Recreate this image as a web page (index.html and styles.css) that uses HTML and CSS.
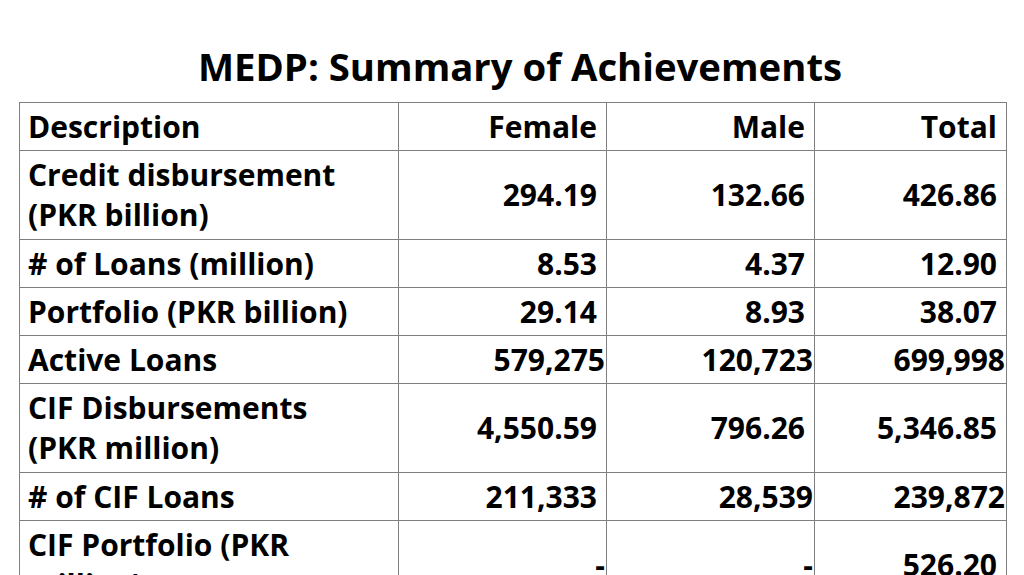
FILE: index.html
```html
<!DOCTYPE html>
<html>
<head>
<meta charset="utf-8">
<link rel="stylesheet" href="styles.css">
</head>
<body>
<h1 class="title">MEDP: Summary of Achievements</h1>
<table class="summary">
  <colgroup>
    <col class="c-desc"><col class="c-num"><col class="c-num"><col class="c-tot">
  </colgroup>
  <thead>
    <tr class="row1">
      <th class="desc">Description</th>
      <th class="num">Female</th>
      <th class="num">Male</th>
      <th class="num">Total</th>
    </tr>
  </thead>
  <tbody>
    <tr class="row2">
      <td class="desc">Credit disbursement (PKR billion)</td>
      <td class="num">294.19</td>
      <td class="num">132.66</td>
      <td class="num">426.86</td>
    </tr>
    <tr class="row1">
      <td class="desc"># of Loans (million)</td>
      <td class="num">8.53</td>
      <td class="num">4.37</td>
      <td class="num">12.90</td>
    </tr>
    <tr class="row1">
      <td class="desc">Portfolio (PKR billion)</td>
      <td class="num">29.14</td>
      <td class="num">8.93</td>
      <td class="num">38.07</td>
    </tr>
    <tr class="row1">
      <td class="desc">Active Loans</td>
      <td class="num tight">579,275</td>
      <td class="num tight">120,723</td>
      <td class="num tight">699,998</td>
    </tr>
    <tr class="row2">
      <td class="desc">CIF Disbursements (PKR million)</td>
      <td class="num">4,550.59</td>
      <td class="num">796.26</td>
      <td class="num">5,346.85</td>
    </tr>
    <tr class="row1">
      <td class="desc"># of CIF Loans</td>
      <td class="num">211,333</td>
      <td class="num tight">28,539</td>
      <td class="num tight">239,872</td>
    </tr>
    <tr class="row2">
      <td class="desc">CIF Portfolio (PKR million)</td>
      <td class="num tight">-</td>
      <td class="num tight">-</td>
      <td class="num">526.20</td>
    </tr>
  </tbody>
</table>
</body>
</html>
```

FILE: styles.css
```css
html, body {
  margin: 0;
  padding: 0;
  background: #ffffff;
  color: #000000;
  overflow: hidden;
}
body {
  font-family: "Open Sans", "Noto Sans", sans-serif;
  font-weight: 700;
}
.title {
  margin: 0;
  padding: 40px 0 0 16px;
  height: 62px;
  font-size: 38.3px;
  line-height: 52px;
  text-align: center;
  font-weight: 700;
}
.summary {
  margin-left: 19px;
  width: 987px;
  border-collapse: collapse;
  table-layout: fixed;
  font-size: 30px;
}
.c-desc { width: 379px; }
.c-num { width: 208px; }
.c-tot { width: 192px; }
.summary th, .summary td {
  border: 1px solid #7f7f7f;
  padding: 0 9px 0 8px;
  line-height: 40px;
  vertical-align: middle;
  font-weight: 700;
}
.row1 { height: 48px; }
.row2 { height: 89px; }
.desc { text-align: left; }
.summary td.desc { padding-right: 30px; }
.num { text-align: right; white-space: nowrap; }
.summary td.tight { padding-right: 1px; }
```
